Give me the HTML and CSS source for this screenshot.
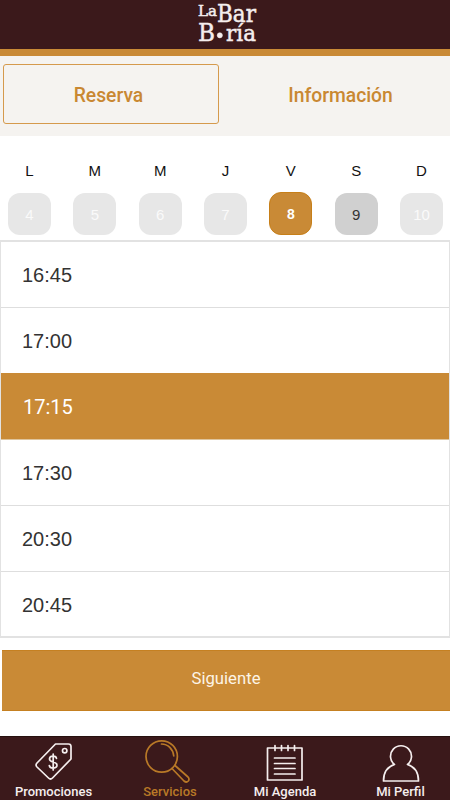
FILE: index.html
```html
<!DOCTYPE html>
<html lang="es">
<head>
<meta charset="utf-8">
<title>La Barbería</title>
<link rel="stylesheet" href="styles.css">
</head>
<body>
<div class="app">
  <header class="header">
    <svg class="logo" width="64" height="46" viewBox="0 0 64 46">
      <text x="3" y="15.5" font-size="14" textLength="19" lengthAdjust="spacingAndGlyphs">La</text>
      <text x="22" y="21.5" font-size="23.5" textLength="39" lengthAdjust="spacingAndGlyphs">Bar</text>
      <text x="3" y="41" font-size="25" textLength="17" lengthAdjust="spacingAndGlyphs">B</text>
      <circle cx="24.8" cy="35.3" r="2.6"/>
      <text x="31" y="41" font-size="23" textLength="30" lengthAdjust="spacingAndGlyphs">ría</text>
    </svg>
  </header>
  <nav class="tabs">
    <a class="tab tab-active">Reserva</a>
    <a class="tab tab-info">Información</a>
  </nav>
  <section class="week">
    <div class="day"><span class="name">L</span><span class="num">4</span></div>
    <div class="day"><span class="name">M</span><span class="num">5</span></div>
    <div class="day"><span class="name">M</span><span class="num">6</span></div>
    <div class="day"><span class="name">J</span><span class="num">7</span></div>
    <div class="day"><span class="name">V</span><span class="num selected">8</span></div>
    <div class="day"><span class="name">S</span><span class="num open">9</span></div>
    <div class="day"><span class="name">D</span><span class="num">10</span></div>
  </section>
  <ul class="times">
    <li>16:45</li>
    <li>17:00</li>
    <li class="chosen">17:15</li>
    <li>17:30</li>
    <li>20:30</li>
    <li>20:45</li>
  </ul>
  <button class="next">Siguiente</button>
  <footer class="bar">
    <a class="item promo">
      <svg width="48" height="48" viewBox="0 0 48 48">
        <path d="M25.500 8H38.500Q41 8 41 10.500V23L22.500 42Q20.500 44 18.500 42L7 31Q5 29 7 27Z"/>
        <circle cx="34.700" cy="14.700" r="2.200"/>
        <path d="M26.500 22.500C26 19 19.500 19.500 19.500 23 19.500 27 27 25 27 29 27 33 20 33 19.300 29.500M23.200 18V34"/>
      </svg>
      <span>Promociones</span>
    </a>
    <a class="item active">
      <svg width="48" height="48" viewBox="0 0 48 48">
        <circle cx="15.700" cy="20.500" r="15.700"/>
        <path d="M15.500 8C22 8 27 13 27.800 20M26 32.500 38 45Q40.500 47 42.300 45 43.800 43 42 41L29 29.500"/>
      </svg>
      <span>Servicios</span>
    </a>
    <a class="item agenda">
      <svg width="48" height="48" viewBox="0 0 48 48">
        <path d="M6.500 12H41V44H6.500ZM14 9.500V14.500M20.500 9.500V14.500M27 9.500V14.500M33.500 9.500V14.500M13.500 22H34M13.500 27.500H34M13.500 32.500H34M13.500 38H34"/>
      </svg>
      <span>Mi Agenda</span>
    </a>
    <a class="item profile">
      <svg width="48" height="48" viewBox="0 0 48 48">
        <path d="M17.500 28.500A10.500 10.500 0 1 1 30.500 28.500C37 30.500 41.500 36 41.500 45H6.500C6.500 36 11 30.500 17.500 28.500Z"/>
      </svg>
      <span>Mi Perfil</span>
    </a>
  </footer>
</div>
</body>
</html>
```

FILE: styles.css
```css
* { box-sizing: border-box; }
body { margin: 0; background: #fff; font-family: Roboto, sans-serif; }
.app { width: 450px; height: 800px; display: flex; flex-direction: column; overflow: hidden; }
.header { height: 56px; flex: none; background: #3b191b; border-bottom: 7px solid #c98a36; padding-left: 195px; }
.logo { display: block; overflow: visible; fill: #f5eeee; stroke: #f5eeee; stroke-width: .5; font-family: "DejaVu Serif", serif; }
.tabs { height: 80px; flex: none; background: #f5f3f0; display: grid; grid-template-columns: 216px 1fr; column-gap: 12px; padding: 8px 0 12px 3px; }
.tab { display: flex; align-items: center; justify-content: center; color: #c98832; font-size: 19.3px; font-weight: 500; padding: 2px 5px 0 0; border: 1px solid transparent; border-radius: 3px; }
.tab-active { border-color: #d59a4c; }
.tab-info { padding-right: 0; }
.week { height: 104px; flex: none; display: grid; grid-template-columns: repeat(7, 43px); justify-content: space-between; padding: 26px 7px 0 8px; font-family: "Liberation Sans", sans-serif; }
.day { display: flex; flex-direction: column; align-items: center; }
.name { height: 31px; line-height: 18px; font-size: 15px; color: #111; }
.num { width: 43px; height: 42px; border-radius: 12px; background: #e7e7e7; color: #fafafa; font-size: 15px; display: flex; align-items: center; justify-content: center; }
.selected { background: #c98a36; color: #fff; font-weight: 700; font-size: 14px; height: 43px; margin-top: -1px; border: 1px solid #c77f18; }
.open { background: #d0d0d0; color: #333; }
.times { list-style: none; margin: 0; padding: 0; height: 398px; flex: none; border: solid #e2e2e2; border-width: 2px 1px; font-family: "Liberation Sans", sans-serif; }
.times li { height: 66px; border-bottom: 1px solid #dedede; padding-left: 21px; line-height: 66px; font-size: 20px; color: #333; }
.times li:last-child { border-bottom: 0; }
.times .chosen { background: #c98a36; color: #fff; font-family: Roboto, sans-serif; padding-left: 22px; border-color: #dfc59d; box-shadow: 0 -1px #c98a36; }
.next { display: block; flex: none; margin: 12px 0 25px 2px; width: 448px; height: 61px; padding: 0 0 5px; border: solid #c58021; border-width: 1px 0; background: #c98a36; color: #fdf4e6; font: 16.7px Roboto, sans-serif; }
.bar { height: 65px; flex: none; background: #3b191b; border-top: 1px solid #26100f; display: grid; grid-template-columns: 111px 118px 112px 109px; color: #f5eeee; }
.item { display: flex; flex-direction: column; align-items: center; font: 500 13px/14px Roboto, sans-serif; }
.item svg { display: block; margin: -1px 0 1px; fill: none; stroke: currentColor; stroke-width: 1.7; stroke-linejoin: round; stroke-linecap: round; overflow: visible; }
.promo { padding-right: 4px; }
.active { color: #b97927; }
.profile { padding-left: 10px; }
```
